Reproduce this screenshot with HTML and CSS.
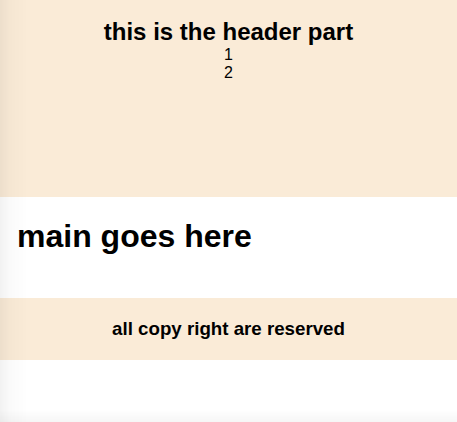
FILE: index.html
```html
<!DOCTYPE html>
<html lang="en">
<head>
<meta charset="utf-8">
<title>Layout</title>
<link rel="stylesheet" href="styles.css">
</head>
<body>
<header class="site-header">
  <h2 class="header-title">this is the header part</h2>
  <div class="header-line">1</div>
  <div class="header-line">2</div>
</header>
<main class="site-main">
  <h1 class="main-title">main goes here</h1>
</main>
<footer class="site-footer">
  <h3 class="footer-text">all copy right are reserved</h3>
</footer>
<div class="vignette"></div>
</body>
</html>
```
FILE: styles.css
```css
html, body {
  margin: 0;
  padding: 0;
  background: #ffffff;
  font-family: "Liberation Sans", Arial, sans-serif;
  color: #000;
}

.site-header {
  background: #faebd7;
  height: 197px;
  box-sizing: border-box;
  padding-top: 18px;
  text-align: center;
}

.header-title {
  margin: 0;
  font-size: 24px;
  font-weight: bold;
}

.header-line {
  font-size: 16px;
}

.site-main {
  padding: 21px 17px 43px;
}

.main-title {
  margin: 0;
  font-size: 32px;
  font-weight: bold;
}

.site-footer {
  background: #faebd7;
  padding: 20px 0;
  text-align: center;
}

.footer-text {
  margin: 0;
  font-size: 18.72px;
  font-weight: bold;
}

.vignette {
  position: fixed;
  inset: 0;
  pointer-events: none;
  background:
    linear-gradient(to right, rgba(0,0,0,0.05) 0, rgba(0,0,0,0.02) 10px, rgba(0,0,0,0) 28px),
    linear-gradient(to top, rgba(0,0,0,0.035) 0, rgba(0,0,0,0) 12px);
}
```
